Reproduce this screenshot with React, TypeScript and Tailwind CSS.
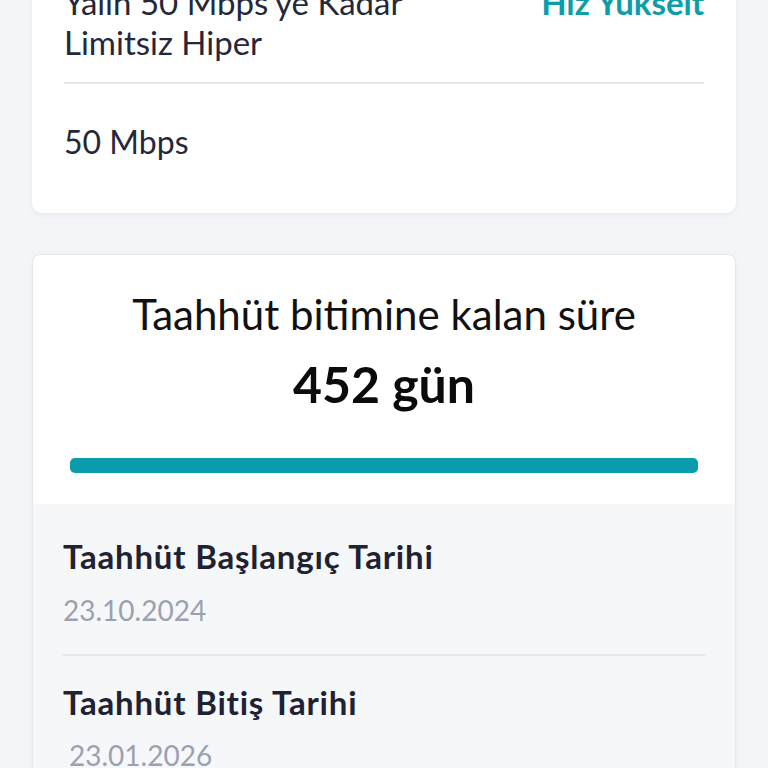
import React from "react";

export default function App() {
  return (
    <div
      className="min-h-[768px] w-[768px] overflow-hidden bg-[#f4f5f8] px-8"
      style={{ fontFamily: "Lato, 'Noto Sans', sans-serif" }}
    >
      {/* Card 1 */}
      <div className="-mt-[50px] rounded-[10px] bg-white px-8 pt-8 pb-[51px] shadow-[0_2px_6px_rgba(0,0,0,0.05)]">
        <div className="flex items-start justify-between">
          <div className="text-[33px] leading-[40px] text-[#24283a]">
            Yalın 50 Mbps&apos;ye Kadar
            <br />
            Limitsiz Hiper
          </div>
          <div className="text-[33px] font-bold leading-[40px] text-[#0b9ea9]">Hız Yükselt</div>
        </div>
        <div className="mt-[20px] h-[2px] bg-[#e7e8eb]" />
        <div className="mt-[38px] text-[32px] leading-[40px] text-[#24283a]">50 Mbps</div>
      </div>

      {/* Card 2 */}
      <div className="mt-[41px] overflow-hidden rounded-[8px] border border-[#e6e7ea] bg-white shadow-[0_1px_4px_rgba(0,0,0,0.04)]">
        <div className="px-[37px] pt-[35px] pb-[31px]">
          <div className="text-center text-[42px] leading-[48px] text-[#111111]">
            Taahhüt bitimine kalan süre
          </div>
          <div className="mt-[18px] text-center text-[50px] font-bold leading-[56px] text-[#0b0b0b]">
            452 gün
          </div>
          <div className="mt-[46px] h-[15px] rounded-[5px] bg-[#0a9cab]" />
        </div>
        <div className="bg-[#f6f7f9] px-[30px] pt-[32px] pb-10">
          <div className="text-[33px] font-bold leading-[40px] tracking-[0.8px] text-[#1e2233]">
            Taahhüt Başlangıç Tarihi
          </div>
          <div className="mt-4 text-[28px] leading-[36px] text-[#9ba1b2]">23.10.2024</div>
          <div className="mt-[26px] h-[2px] bg-[#e6e7ea]" />
          <div className="mt-[26px] text-[33px] font-bold leading-[40px] tracking-[0.8px] text-[#1e2233]">
            Taahhüt Bitiş Tarihi
          </div>
          <div className="mt-[15px] pl-[6px] text-[28px] leading-[36px] text-[#9ba1b2]">23.01.2026</div>
        </div>
      </div>
    </div>
  );
}
